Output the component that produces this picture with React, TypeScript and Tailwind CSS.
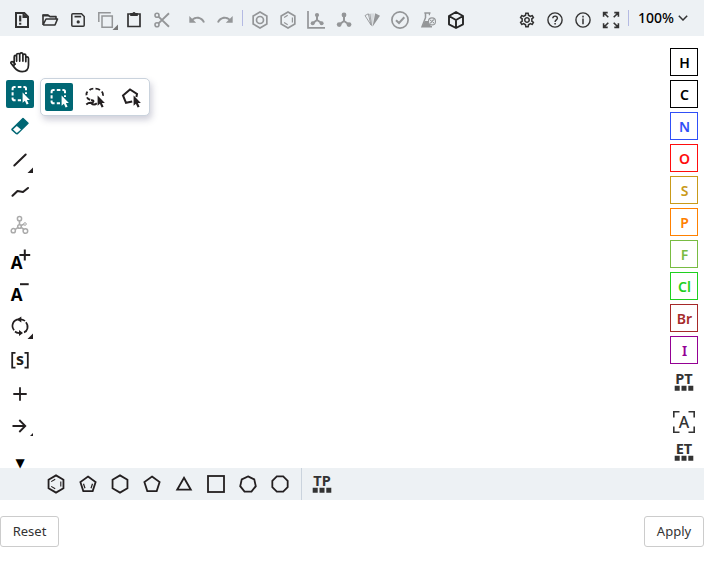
import React from "react";
import { MdOutlineSettings } from "react-icons/md";

type P = { children?: React.ReactNode; className?: string };

/* 28px icon cell whose origin is the centre of the cell */
function Icon({ children, className = "text-[#333333]" }: P) {
  return (
    <svg
      viewBox="-14 -14 28 28"
      className={`block h-7 w-7 shrink-0 ${className}`}
      fill="none"
      stroke="currentColor"
      strokeWidth={2}
    >
      {children}
    </svg>
  );
}

const DIM = "text-[#949698]";
const INK = "text-[#231f20]";

function polygon(n: number, r: number, turn = -90, cy = 0) {
  return Array.from({ length: n }, (_, i) => {
    const a = ((turn + (360 / n) * i) * Math.PI) / 180;
    return `${(r * Math.cos(a)).toFixed(2)},${(cy + r * Math.sin(a)).toFixed(2)}`;
  }).join(" ");
}

const Corner = ({ x = 12, y = 10, s = 5 }: { x?: number; y?: number; s?: number }) => (
  <path d={`M${x} ${y}V${y - s}L${x - s} ${y}Z`} fill="currentColor" stroke="none" />
);

const cursor = "M0 0L0 10.2L2.3 8.2L4 12L6 11.1L4.3 7.3H7.3Z";

const SelectRect = () => (
  <>
    <path d="M-7.4 -3.8V-5.2Q-7.4 -7 -5.6 -7H-4.4M-2.2 -7H1.4M3.4 -7H4.4Q6 -7 6 -5.4V-3.8M-7.4 -1.8V1.4M-7.4 3.4V4.4Q-7.4 6.2 -5.6 6.2H-4.4M-2.2 6.2H1M6 -1.8V0" />
    <path d={cursor} transform="translate(2.6 -1.4) scale(1)" fill="currentColor" stroke="none" />
  </>
);

function TopBar() {
  return (
    <div className="flex h-9 shrink-0 items-start bg-[#edf1f4] pl-2 pt-[6px]">
      <Icon>
        <path d="M-6 -7H2.3L6 -3.3V7H-6Z" />
        <path d="M0.5 -7L6 -3V-2H.5Z" fill="currentColor" stroke="none" />
        <path d="M-1.8 -4.5V1.6M-1.8 2.8V4.8" strokeWidth={2.2} />
      </Icon>
      <Icon>
        <path d="M-7 5V-5H-2L0 -3.4H6V-1M-7 5H5L7.5 -1H-4L-7 5" strokeWidth={1.6} strokeLinejoin="round" />
        <path d="M-7.5 -5.5H-2L0 -3.5H-7.5Z" fill="currentColor" stroke="none" />
      </Icon>
      <Icon>
        <path d="M-6.2 -5.2Q-6.2 -6.2 -5.2 -6.2H3.5L6.2 -3.5V5.2Q6.2 6.2 5.2 6.2H-5.2Q-6.2 6.2 -6.2 5.2Z" strokeWidth={1.5} />
        <path d="M-3.5 -3.4H3.2" strokeWidth={1.7} />
        <circle cx="0.2" cy="1.9" r="1.6" fill="currentColor" stroke="none" />
      </Icon>
      <Icon className={DIM}>
        <path d="M-7.2 2V-7.2H4.8M-4 -4H6.3V7.3H-4Z" strokeWidth={1.5} />
        <g className="text-[#777777]"><Corner x={12} y={10} s={5.5} /></g>
      </Icon>
      <Icon>
        <path d="M-6 -6H6V6.5H-6Z" strokeWidth={1.7} />
        <path d="M-3.8 -7H-1.5A1.6 1.6 0 0 1 1.5 -7H3.8V-4H-3.8Z" fill="currentColor" stroke="none" />
      </Icon>
      <Icon className={DIM}>
        <circle cx="-5" cy="-4.8" r="2" strokeWidth={1.6} />
        <circle cx="-5" cy="4.8" r="2" strokeWidth={1.6} />
        <path d="M-3.5 -3.4L7 6.7M-3.5 3.4L7 -6.7" strokeWidth={1.9} />
      </Icon>
      <div className="ml-[7px] flex">
        <Icon className={DIM}>
          <path transform="translate(-9.2 -9.3) scale(.76)" fill="currentColor" stroke="none" d="M12.5 8c-2.65 0-5.05.99-6.9 2.6L2 7v9h9l-3.62-3.62c1.39-1.16 3.16-1.88 5.12-1.88 3.54 0 6.55 2.31 7.6 5.5l2.37-.78C21.08 11.03 17.15 8 12.5 8z" />
        </Icon>
        <Icon className={DIM}>
          <path transform="translate(9.2 -9.3) scale(-.76 .76)" fill="currentColor" stroke="none" d="M12.5 8c-2.65 0-5.05.99-6.9 2.6L2 7v9h9l-3.62-3.62c1.39-1.16 3.16-1.88 5.12-1.88 3.54 0 6.55 2.31 7.6 5.5l2.37-.78C21.08 11.03 17.15 8 12.5 8z" />
        </Icon>
      </div>
      <div className="ml-[3px] mr-[3px] mt-1 h-4 w-px bg-[#b4bae3]" />
      <Icon className={DIM}>
        <polygon points={polygon(6, 7.9)} strokeWidth={1.7} />
        <circle r="3.5" strokeWidth={1.7} />
      </Icon>
      <Icon className={DIM}>
        <polygon points={polygon(6, 7.9)} strokeWidth={1.7} />
        <path d="M-3.9 -2.5L-.3 -4.7M4.4 -2.5V2.5M-3.9 2.5L-.3 4.7" strokeWidth={1.2} />
      </Icon>
      <Icon className={DIM}>
        <path d="M-8 -9V7.8H9" strokeWidth={1.7} />
        <path d="M1 -5V0L-3 3M1 0L5.5 3" />
        <g fill="currentColor" stroke="none"><circle cx="1" cy="-5" r="2.1" /><circle cx="-3.3" cy="3.2" r="2" /><circle cx="5.6" cy="3.2" r="2" /></g>
      </Icon>
      <Icon className={DIM}>
        <path d="M0 -5V1L-4.7 4.5M0 1L5 4.5" />
        <g fill="currentColor" stroke="none"><circle cy="-5" r="2.4" /><circle cx="-4.8" cy="4.6" r="2.4" /><circle cx="5" cy="4.6" r="2.4" /></g>
      </Icon>
      <Icon className={DIM}>
        <path d="M-7 -4.4L-3.7 -6.2L-1 5Z" strokeWidth={.9} />
        <path d="M-2.6 -6.5H2.6L0 6.5Z" fill="currentColor" opacity=".25" stroke="none" />
        <path d="M3.2 -6.8L8 -4.3L0.5 6.8Z" fill="currentColor" stroke="none" />
        <path d="M-2.2 -6L-.2 6" strokeWidth={.8} />
      </Icon>
      <Icon className={DIM}>
        <circle r="8.1" strokeWidth={1.7} />
        <path d="M-4 .2L-1 3L4.3 -2.7" />
      </Icon>
      <Icon className={DIM}>
        <path d="M-3.7 -7H2.5M-2.5 -7V-2.3L-6 6.7H4" strokeWidth={1.5} />
        <path d="M-3.3 1H1L3 7H-6Z" fill="currentColor" stroke="none" />
        <circle cx="4" cy="1.4" r="3.5" className="fill-[#edf1f4]" strokeWidth={1.1} />
        <path d="M1.4 -4.8V-7M2.3 3.3L5.7 -.5M2.7 -.2V.9M5.4 2V3.2" strokeWidth={1.2} />
      </Icon>
      <Icon className="text-[#252525]">
        <path d="M0 -8L7 -4V4.3L0 8L-7 4.3V-4ZM-7 -4L0 0L7 -4M0 0V8" strokeWidth={1.9} strokeLinejoin="round" />
      </Icon>
      <div className="ml-auto flex h-7 w-7 items-center justify-center text-[#333]">
        <MdOutlineSettings className="h-[18px] w-[18px]" />
      </div>
      <Icon>
        <circle r="7.1" strokeWidth={1.4} />
        <path d="M-2.2 -1.7C-2.2 -4.6 2.4 -4.6 2.4 -1.8C2.4 -.2 .1 0 .1 2" strokeWidth={1.4} />
        <path d="M.1 3V4.6" strokeWidth={1.5} />
      </Icon>
      <Icon>
        <circle r="7.1" strokeWidth={1.4} />
        <path d="M0 -1.4V4.2M0 -4.2V-2.6" strokeWidth={1.5} />
      </Icon>
      <Icon>
        <path d="M-3.3 -7.4H-7.4V-3.3M-7 -7L-2.7 -2.7M3.3 -7.4H7.4V-3.3M7 -7L2.7 -2.7M-3.3 7.4H-7.4V3.3M-7 7L-2.7 2.7M3.3 7.4H7.4V3.3M7 7L2.7 2.7" strokeWidth={1.6} />
      </Icon>
      <div className="ml-[3px] mt-1 h-4 w-px bg-[#b4bae3]" />
      <span className="ml-[9px] mt-[2px] w-10 text-[14px] font-medium leading-5 text-black">100%</span>
      <svg viewBox="0 0 10 6" className="mr-4 mt-[9px] h-[6px] w-[10px]" fill="none" stroke="#333" strokeWidth="1.5">
        <path d="M.8 .8L5 5L9.2 .8" />
      </svg>
    </div>
  );
}

function LeftTools() {
  return (
    <div className="relative flex w-10 shrink-0 flex-col items-center pt-3">
      <Icon className="text-[#252525]">
        <path d="M-5.8 3V-5.2Q-5.8 -6.7 -4.6 -6.7Q-3.4 -6.7 -3.4 -5.2V-1M-3.4 -5.2V-7Q-3.4 -8.6 -1.8 -8.6Q-.3 -8.6 -.3 -7V-1M-.3 -7Q-.3 -9.3 1.4 -9.3Q2.9 -9.3 2.9 -7.5V-1M2.9 -6.8Q3 -8 4.4 -8Q5.8 -8 5.8 -6.5V-.5M5.8 -4.3Q6.2 -5.3 7.2 -5.2Q8.5 -5 8.5 -3.5V3C8.5 7.5 6 9.6 2.2 9.6C-1.5 9.6 -3.3 8.3 -5.3 5.8L-9 1.2Q-9.5 .2 -8.5 -.3Q-7.7 -.8 -6.8 0L-4.8 2" transform="translate(0 .1)" strokeWidth={1.7} strokeLinecap="round" strokeLinejoin="round" />
      </Icon>
      <div className="mt-1 rounded-[2px] bg-[#006774]"><Icon className="text-white"><SelectRect /></Icon></div>
      <Icon className="mt-1 text-[#006774]">
        <path d="M-8 3.2L3 -7.5L8 -2.7L-2.7 7.6Q-3.2 8 -3.8 7.5L-8 3.7Z" strokeWidth={1.5} strokeLinejoin="round" fill="currentColor" />
        <path d="M-7 3.5L-3.2 -.1L1 3.5L-3.2 7Z" fill="#fff" stroke="none" />
      </Icon>
      <Icon className={`mt-[6px] ${INK}`}><path d="M-5.7 5.5L5.7 -5.5" strokeLinecap="round" strokeWidth={2} /><Corner x={13} y={13} s={5.5} /></Icon>
      <Icon className={`mt-1 ${INK}`}><path d="M-7.5 3.7L-2.5 -1L3 0L8 -4" strokeWidth={2.1} strokeLinecap="round" strokeLinejoin="round" /></Icon>
      <Icon className="mt-[6px] text-[#ababab]">
        <path d="M-.5 -6V.5M-1.5 1.2L-5 3.6M.8 1.2L4 3.5M.8 -.4L4 -1.8" strokeWidth={1.6} />
        <g fill="#fff" strokeWidth={1.5}><circle cx="-.5" cy="-7.3" r="2.1" /><circle cx="-.5" cy=".5" r="1.8" /><circle cx="-6.7" cy="4.7" r="2.1" /><circle cx="5.4" cy="5" r="2.3" /><circle cx="5" cy="-2" r="1.3" strokeWidth={1} /></g>
      </Icon>
      <Icon className={`mt-[6px] ${INK}`}><text x="-9.3" y="8.5" className="fill-black stroke-none text-[17px] font-bold">A</text><path d="M-.5 -5H10.2M4.8 -10.5V.5" /></Icon>
      <Icon className={`mt-1 ${INK}`}><text x="-9.3" y="8.5" className="fill-black stroke-none text-[17px] font-bold">A</text><path d="M0 -7.8H8.7" /></Icon>
      <Icon className={`mt-[6px] ${INK}`}>
        <path d="M-5.9 4.2C-9.2 .3 -7.3 -6.4 -1 -6.6M-1 7.1C-2.8 6.9 -4 6.4 -5 5.5M5.9 -3.7C9.2 .3 7.3 5.4 4 6.4M1 -6.7C2.8 -6.5 4 -6 5 -5" strokeWidth={1.7} />
        <path d="M-3.2 -6.5L1.3 -9.5V-3.6ZM3 7L-1 10V4Z" transform="translate(0 0)" fill="currentColor" stroke="none" /><Corner x={13} y={13} s={5.5} />
      </Icon>
      <Icon className={`mt-[6px] ${INK}`}><path d="M-4.5 -7.2H-7.8V7.7H-4.5M4.5 -7.2H7.8V7.7H4.5" strokeWidth={1.8} /><text x="0" y="4.6" textAnchor="middle" className="fill-[#231f20] stroke-none text-[16px] font-bold">s</text></Icon>
      <Icon className={`mt-[6px] ${INK}`}><path d="M-6.7 0H6.7M0 -6.7V6.7" strokeWidth={1.8} /></Icon>
      <Icon className={`mt-1 ${INK}`}><path d="M-7.5 0H5.3M-.7 -6L5.3 0L-.7 6" strokeWidth={1.8} /><Corner x={13} y={10} s={3} /></Icon>
      <span className="mt-[16px] font-['DejaVu_Sans'] text-[12px] leading-[14px] text-black">▼</span>
      <div className="absolute left-10 top-[42px] flex h-[38px] w-[110px] items-center justify-between rounded-[5px] border border-[#cad3dd] bg-white px-1 shadow-[2px_4px_6px_rgba(70,70,110,0.25)]">
        <div className="rounded-[2px] bg-[#006774]"><Icon className="text-white"><SelectRect /></Icon></div>
        <Icon className={INK}>
          <path d="M-8.5 -1.8Q-9 -4 -7.5 -5.4M-5.5 -7Q-3.8 -8.3 -1.7 -8.4M.5 -8.4Q3 -8.3 5 -7M6.8 -5.5Q8.5 -3.5 8 -1.3M-8 .3Q-7 2.3 -4.8 2.8M-8.7 7.5Q-6.5 5.6 -4 5.8Q-2 6 -1.5 4.3Q-1.5 3 -4 3.2M-4 6C-2 8 0 8 1.8 6.3" strokeWidth={1.9} />
          <path d={cursor} transform="translate(2.6 -1.4) scale(1)" fill="currentColor" stroke="none" />
        </Icon>
        <Icon className={INK}>
          <path d="M1.2 4.4L-5 5.8L-8 -1.5L-1 -7.5L6 -3L5.4 0" />
          <path d={cursor} transform="translate(2.6 -1.4) scale(1)" fill="currentColor" stroke="none" />
        </Icon>
      </div>
    </div>
  );
}

const atoms: [string, string][] = [
  ["H", "text-black"], ["C", "text-black"], ["N", "text-[#304ff7]"], ["O", "text-[#ff0d0d]"], ["S", "text-[#c99a19]"],
  ["P", "text-[#ff8000]"], ["F", "text-[#78bc42]"], ["Cl", "text-[#1fd01f]"], ["Br", "text-[#a62929]"], ["I", "text-[#940094]"],
];

function TableIcon({ label, className = "" }: { label: string; className?: string }) {
  return (
    <Icon className={`text-[#333] ${className}`}>
      <text x="0" y="2" textAnchor="middle" className="fill-[#333] stroke-none text-[14.5px] font-bold">{label}</text>
      <path d="M-9.3 6.2H-4.3M-2.5 6.2H2.5M4.3 6.2H9.3" strokeWidth={5} />
    </Icon>
  );
}

function RightTools() {
  return (
    <div className="ml-auto flex w-[34px] shrink-0 flex-col items-start pt-3">
      <div className="flex flex-col gap-1">
        {atoms.map(([label, color]) => (
          <div key={label} className={`flex h-7 w-7 items-center justify-center border border-current pl-px text-[14px] font-semibold ${color}`}>{label}</div>
        ))}
      </div>
      <TableIcon label="PT" className="mt-1" />
      <Icon className="mt-3 text-[#333]">
        <path d="M-10.2 -4.5V-10.2H-4.5M4.5 -10.2H10.2V-4.5M10.2 4.5V10.2H4.5M-4.5 10.2H-10.2V4.5" strokeWidth={1.6} />
        <text x="0" y="6" textAnchor="middle" className="fill-[#333] stroke-none text-[16px] font-medium">A</text>
      </Icon>
      <TableIcon label="ET" className="mt-[2px]" />
    </div>
  );
}

function BottomBar() {
  return (
    <div className="flex h-8 shrink-0 items-center bg-[#edf1f4] pl-[42px]">
      <div className="flex gap-1">
        <Icon className={INK}><polygon points={polygon(6, 8.6)} strokeWidth={1.8} /><path d="M-4.8 -2.4L-.8 -4.8M4.8 -2.6V2.6M-4.8 2.4L-.8 4.8" strokeWidth={1.1} /></Icon>
        <Icon className={INK}><polygon points={polygon(5, 8, -90, .6)} strokeWidth={1.8} /><path d="M-4.5 -.3L-3 4.3M4.5 -.3L3 4.3" strokeWidth={1.2} /></Icon>
        <Icon className={INK}><polygon points={polygon(6, 8.6)} strokeWidth={1.8} /></Icon>
        <Icon className={INK}><polygon points={polygon(5, 8, -90, .6)} strokeWidth={1.8} /></Icon>
        <Icon className={INK}><path d="M0 -6.2L6.8 5.7H-6.8Z" strokeWidth={1.8} /></Icon>
        <Icon className={INK}><rect x="-8" y="-8" width="16" height="16" strokeWidth={1.8} /></Icon>
        <Icon className={INK}><polygon points={polygon(7, 8, -90, .4)} strokeWidth={1.8} /></Icon>
        <Icon className={INK}><polygon points={polygon(8, 8.3, 22.5)} strokeWidth={1.8} /></Icon>
      </div>
      <div className="ml-[7px] h-8 w-px bg-[#cad3dd]" />
      <TableIcon label="TP" className="ml-[6px]" />
    </div>
  );
}

export default function App() {
  return (
    <div className="flex h-[564px] w-[704px] flex-col overflow-hidden bg-white font-['Noto_Sans',sans-serif]">
      <TopBar />
      <div className="flex h-[432px] shrink-0">
        <LeftTools />
        <RightTools />
      </div>
      <BottomBar />
      <div className="mt-4 flex justify-between text-[13px] text-[#333]">
        <button className="h-[31px] w-[59px] rounded-[3px] border border-[#ccc] bg-white">Reset</button>
        <button className="h-[31px] w-[60px] rounded-[3px] border border-[#ccc] bg-white">Apply</button>
      </div>
    </div>
  );
}
